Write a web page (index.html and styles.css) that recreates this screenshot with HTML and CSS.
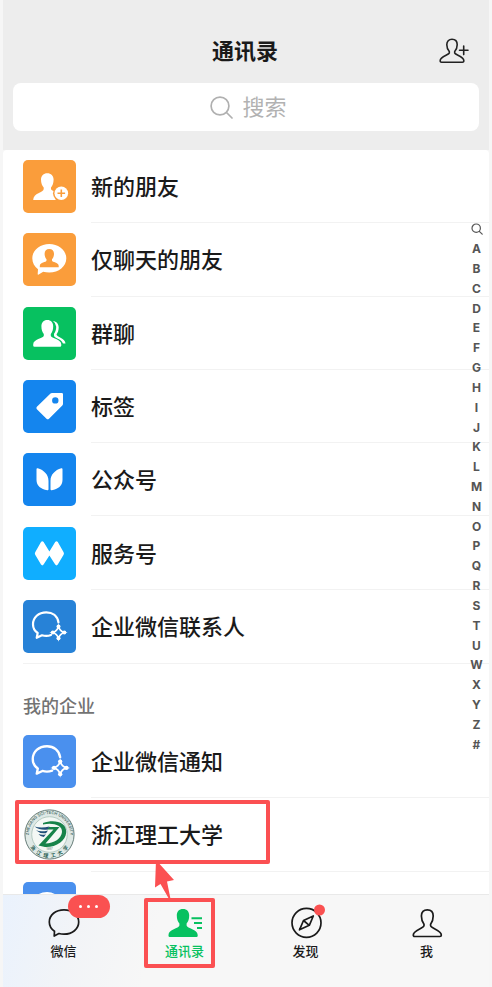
FILE: index.html
```html
<!DOCTYPE html>
<html lang="zh-CN">
<head>
<meta charset="utf-8">
<meta name="viewport" content="width=device-width, initial-scale=1">
<title>通讯录</title>
<link rel="stylesheet" href="styles.css">
</head>
<body>
<svg class="sprite" aria-hidden="true">
  <symbol id="wecom" viewBox="0 0 53 53">
    <path d="M35.500 22.500C34.500 16 29.500 12.300 23.300 12.300C15.500 12.300 10 17.500 10 24.200C10 28 11.700 31 14.700 33L13.700 37.800L19 35.300C22 36.200 25.500 36 28 35" fill="none" stroke="#fff" stroke-width="2.200" stroke-linecap="round" stroke-linejoin="round"/>
    <path d="M35.500 26.500Q36.800 31.200 41.500 32.500Q36.800 33.800 35.500 38.500Q34.200 33.800 29.500 32.500Q34.200 31.200 35.500 26.500Z" fill="none" stroke="#fff" stroke-width="1.700"/>
    <g fill="#fff"><circle cx="35.500" cy="26.600" r="2"/><circle cx="41.300" cy="32.500" r="2"/><circle cx="35.500" cy="38.300" r="2"/><circle cx="29.800" cy="32.500" r="2"/></g>
  </symbol>
</svg>
<div class="app">
  <header class="header">
    <div class="titlebar">
      <h1 class="title">通讯录</h1>
      <button class="add" type="button" aria-label="添加朋友">
        <svg width="30" height="26" viewBox="0 0 30 26" fill="none" stroke="#222" stroke-width="1.600" stroke-linejoin="round" stroke-linecap="round"><path d="M10.300 13.500C8.700 11.700 7.800 9.300 7.800 6.800C7.800 3.400 9.800 1.300 13 1.300S18.200 3.400 18.200 6.800C18.200 9.300 17.300 11.700 15.700 13.500V15C16 16.800 24.800 18.600 24.800 22.500Q25 24.300 23.400 24.300H2.600Q1 24.300 1.200 22.500C1.200 18.600 10 16.800 10.300 15Z"/><path d="M20.500 12.300H29M24.700 8V16.600"/></svg>
      </button>
    </div>
    <label class="search">
      <svg width="23" height="23" viewBox="0 0 23 23" fill="none" stroke="#b0b0b0" stroke-width="1.700" stroke-linecap="round"><circle cx="10" cy="10" r="8.900"/><path d="M16.500 16.500L22 22"/></svg>
      <input type="text" placeholder="搜索" aria-label="搜索">
    </label>
  </header>

  <main class="content">
    <ul class="list list-main">
      <li><a class="row" href="#">
        <svg class="icon orange" viewBox="0 0 53 53"><path fill="#fff" d="M24.300 13.200C28 13.200 30.600 15.800 30.600 19.500C30.600 23 29.500 25.800 28 27.400V29C28 31 36.500 32 38 36V40H10.200C10.200 33 20.700 32.500 20.700 29V27.400C19.100 25.800 18 23 18 19.500C18 15.800 20.600 13.200 24.300 13.200Z"/><circle cx="38.300" cy="33.300" r="8.300" fill="#fa9d3b"/><circle cx="38.300" cy="33.300" r="6.800" fill="#fff"/><path d="M34.500 33.300H42.100M38.300 29.500V37.100" stroke="#fa9d3b" stroke-width="1.600"/></svg>
        <span class="name">新的朋友</span></a></li>
      <li><a class="row" href="#">
        <svg class="icon orange" viewBox="0 0 53 53"><path fill="#fff" d="M26.300 11C35.800 11 43.300 17.200 43.300 25.300S35.800 39.600 26.300 39.600Q23 39.600 20.200 38.800L15.700 41.500Q14.500 42 14.700 40.700L15 36.200C11.500 33.600 9.300 29.800 9.300 25.300C9.300 17.200 16.800 11 26.300 11Z"/><path fill="#fa9d3b" d="M26.300 16C29.200 16 31 18 31 20.700C31 23 30.300 25 29 26.300V27.600C29.300 29.500 35.500 29.500 35.700 32.800V34.300H16.800V32.800C17 29.500 23.200 29.500 23.500 27.600V26.300C22.300 25 21.600 23 21.600 20.700C21.600 18 23.400 16 26.300 16Z"/></svg>
        <span class="name">仅聊天的朋友</span></a></li>
      <li><a class="row" href="#">
        <svg class="icon green" viewBox="0 0 53 53"><path fill="#fff" d="M24.300 13C28 13 30.200 15.700 30.200 19.300C30.200 22.800 29.300 25.300 27.800 27V28.800C28.200 31.500 38.300 32 38.300 37.500V38.500Q38.300 39.700 37 39.700H11.500Q10.200 39.700 10.200 38.500V37.500C10.200 32 20.300 31.500 20.800 28.800V27C19.300 25.300 18.400 22.800 18.400 19.300C18.400 15.700 20.600 13 24.300 13Z"/><path fill="#fff" d="M30 14C33.500 14.500 35.700 16.800 35.700 20.500C35.700 23.500 34.800 25.800 33.500 27.300C33.500 30.200 42.500 31.500 42.500 36.500Q40.500 36.700 39.800 36.300C38.500 31.500 31 31.500 31 28.500V26.800C32.500 24.700 33.200 22.500 33.200 19.800Q33 16 30 14Z"/></svg>
        <span class="name">群聊</span></a></li>
      <li><a class="row" href="#">
        <svg class="icon blue" viewBox="0 0 53 53"><path fill="#fff" fill-rule="evenodd" d="M27.500 13.500Q28 13 29 13H38.800Q40 13 40 14.200V23.800Q40 24.800 39.300 25.500L26 38.700Q24.700 39.900 23.500 38.700L13.900 29.200Q12.700 28 13.900 26.800ZM32.300 17.200A3.200 3.200 0 1 0 32.300 23.600A3.200 3.200 0 1 0 32.300 17.200Z"/></svg>
        <span class="name">标签</span></a></li>
      <li><a class="row" href="#">
        <svg class="icon blue" viewBox="0 0 53 53"><path fill="#fff" d="M13.500 16.200Q13.500 14.900 14.700 15.300C21 17.200 25.500 21.500 25.500 28V36.200Q25.500 37.400 24.300 37.200C18 36.200 13.500 33 13.500 27ZM39.500 16.200Q39.500 14.900 38.300 15.300C32 17.200 27.500 21.500 27.500 28V36.200Q27.500 37.400 28.700 37.200C35 36.200 39.500 33 39.500 27Z"/></svg>
        <span class="name">公众号</span></a></li>
      <li><a class="row" href="#">
        <svg class="icon sky" viewBox="0 0 53 53"><path fill="#fff" d="M18 15.100Q19.300 13.500 20.600 15.100L26.400 24.400L32.200 15.100Q33.500 13.500 34.800 15.100L40.600 25.200Q41.300 26.500 40.600 27.800L34.800 37.600Q33.500 39.200 32.200 37.600L26.400 28.600L20.600 37.600Q19.300 39.200 18 37.600L12.200 27.800Q11.500 26.500 12.200 25.200Z"/></svg>
        <span class="name">服务号</span></a></li>
      <li><a class="row" href="#">
        <svg class="icon wecom" viewBox="0 0 53 53"><use href="#wecom"/></svg>
        <span class="name">企业微信联系人</span></a></li>
    </ul>

    <h2 class="section">我的企业</h2>
    <ul class="list list-corp">
      <li><a class="row" href="#">
        <svg class="icon cornflower" viewBox="0 0 53 53"><use href="#wecom" x="-1" y="-2" width="57" height="57"/></svg>
        <span class="name">企业微信通知</span></a></li>
      <li><a class="row marked" href="#">
        <svg class="icon" viewBox="0 0 53 53">
          <defs><path id="arc-top" d="M6.500 32.500A20.800 20.800 0 1 1 46.500 32.500"/></defs>
          <circle cx="26.500" cy="26.500" r="24.600" fill="#dfe9e6" stroke="#667c78" stroke-width="1"/>
          <circle cx="26.500" cy="26.500" r="17.800" fill="#f4f8f5" stroke="#b5cbc3" stroke-width="1"/>
          <text class="seal-en"><textPath href="#arc-top" startOffset="50%" text-anchor="middle">ZHEJIANG SCI-TECH UNIVERSITY</textPath></text>
          <g class="seal-cn" text-anchor="middle">
            <text transform="rotate(50 26.500 26.500)" x="26.500" y="49.500">浙</text>
            <text transform="rotate(30 26.500 26.500)" x="26.500" y="49.500">江</text>
            <text transform="rotate(10 26.500 26.500)" x="26.500" y="49.500">理</text>
            <text transform="rotate(-10 26.500 26.500)" x="26.500" y="49.500">工</text>
            <text transform="rotate(-30 26.500 26.500)" x="26.500" y="49.500">大</text>
            <text transform="rotate(-50 26.500 26.500)" x="26.500" y="49.500">学</text>
          </g>
          <path fill="#17834a" d="M20 15C32 11 43.500 14.500 43.200 24C43 33 33 39.500 22 39L15.500 37.500L30.500 21.500H24L26 19H36.500L22.500 35.500C31 35.500 38.500 30.500 39 24C39.300 17 30 14.500 20 16.500Z"/>
          <path fill="#204f78" d="M11.500 18.500Q18 20.500 26.500 18.500L24.500 21.500Q17 22.500 11.500 18.500ZM13 22.300Q18 24.300 25 22.500L23 25.200Q17 26 13 22.300ZM15.500 26Q19 27.500 23 26.200L20.800 29Q17.500 29 15.500 26Z"/>
          <text class="seal-year" x="26.500" y="42" text-anchor="middle">1897</text>
        </svg>
        <span class="name">浙江理工大学</span></a></li>
      <li><a class="row" href="#" aria-label="企业微信">
        <svg class="icon cornflower" viewBox="0 0 53 53"><use href="#wecom" x="-1" y="-2" width="57" height="57"/></svg>
        <span class="name"></span></a></li>
    </ul>

    <nav class="index" aria-label="索引">
      <a href="#" aria-label="搜索"><svg width="12" height="12" viewBox="0 0 12 12" fill="none" stroke="#555" stroke-width="1.200" stroke-linecap="round"><circle cx="5.200" cy="5.200" r="4.200"/><path d="M8.300 8.300L11.200 11.200"/></svg></a>
      <a href="#">A</a><a href="#">B</a><a href="#">C</a><a href="#">D</a><a href="#">E</a><a href="#">F</a><a href="#">G</a><a href="#">H</a><a href="#">I</a><a href="#">J</a><a href="#">K</a><a href="#">L</a><a href="#">M</a><a href="#">N</a><a href="#">O</a><a href="#">P</a><a href="#">Q</a><a href="#">R</a><a href="#">S</a><a href="#">T</a><a href="#">U</a><a href="#">W</a><a href="#">X</a><a href="#">Y</a><a href="#">Z</a><a href="#">#</a>
    </nav>
  </main>

  <nav class="tabs">
    <a class="tab" href="#">
      <svg class="tab-icon" viewBox="0 0 32 32" fill="none" stroke="#1a1a1a" stroke-width="1.700" stroke-linejoin="round"><path d="M16 2.800C24.300 2.800 30.700 8 30.700 15S24.300 27.200 16 27.200Q13.200 27.200 10.900 26.500L6.200 29L6.500 24.300C3.200 22 1.300 18.700 1.300 15C1.300 8 7.700 2.800 16 2.800Z"/></svg>
      <span>微信</span>
      <span class="badge"><i></i><i></i><i></i></span>
    </a>
    <a class="tab active" href="#">
      <svg class="tab-icon" viewBox="0 0 32 32"><path fill="#07c160" d="M14 2C18 2 20.200 4.700 20.200 8.500C20.200 12 19.200 14.800 17.600 16.600V18.500C18 21.500 28.700 22 28.700 28V28.700Q28.700 29.900 27.500 29.900H.7Q-.5 29.900 -.5 28.700V28C-.5 22 10 21.500 10.400 18.500V16.600C8.800 14.800 7.800 12 7.800 8.500C7.800 4.700 10 2 14 2Z"/><path d="M22.500 11.300H33M25 16H33M28 21H33" stroke="#07c160" stroke-width="1.900"/></svg>
      <span>通讯录</span>
      <svg class="pointer" width="20" height="40" viewBox="0 0 20 40"><path fill="#fb5052" d="M2 0L20 20L13 21.500L16.500 39H15L6.500 24L1 27.500Z"/></svg>
    </a>
    <a class="tab" href="#">
      <svg class="tab-icon" viewBox="0 0 32 32" fill="none" stroke="#1a1a1a" stroke-width="1.700" stroke-linejoin="round"><circle cx="16.500" cy="15.800" r="14.500"/><path d="M23.300 9L19.300 18.300L9.500 22.800L13.500 13.500ZM13.500 13.500L19.300 18.300"/><circle cx="29.500" cy="3" r="5.500" fill="#fa5151" stroke="none"/></svg>
      <span>发现</span>
    </a>
    <a class="tab" href="#">
      <svg class="tab-icon" viewBox="0 0 32 32" fill="none" stroke="#1a1a1a" stroke-width="1.700" stroke-linejoin="round"><path d="M13 17.200C11.300 15 10.400 12 10.400 9C10.400 5 12.600 2.800 16.300 2.800S22.200 5 22.200 9C22.200 12 21.300 15 19.600 17.200V18.500C19.600 21.500 30.300 23 30.300 28V28.300Q30.300 29.500 29 29.500H3.600Q2.300 29.500 2.300 28.300V28C2.300 23 13 21.500 13 18.500Z"/></svg>
      <span>我</span>
    </a>
  </nav>
</div>
</body>
</html>
```

FILE: styles.css
```css
*,
*::before,
*::after {
  box-sizing: border-box;
}

body {
  margin: 0;
  background: #f6f6f6;
  color: #1a1a1a;
  font-family: Inter, "Noto Sans CJK SC", sans-serif;
}

a {
  color: inherit;
  text-decoration: none;
}

ul {
  margin: 0;
  padding: 0;
  list-style: none;
}

.sprite {
  display: none;
}

.app {
  display: flex;
  flex-direction: column;
  height: 100vh;
  margin: 0 3px;
}

/* Header */
.header {
  flex: none;
  padding: 18px 10px 19px;
  background: #ededed;
}

.titlebar {
  display: grid;
  grid-template-columns: 1fr auto 1fr;
  align-items: center;
  height: 65px;
  padding-right: 10px;
  padding-left: 8px;
}

.title {
  grid-column: 2;
  margin: 0;
  font-size: 22px;
  line-height: 32px;
  font-weight: 700;
}

.add {
  display: flex;
  justify-self: end;
  padding: 0;
  border: 0;
  background: none;
}

.search {
  display: flex;
  align-items: center;
  justify-content: center;
  gap: 10px;
  height: 48px;
  padding-left: 6px;
  border-radius: 8px;
  background: #fff;
}

.search input {
  width: 46px;
  padding: 0;
  border: 0;
  outline: 0;
  background: none;
  font: inherit;
  font-size: 22px;
  line-height: 32px;
}

.search input::placeholder {
  color: #b2b2b2;
  opacity: 1;
}

/* Contact list */
.content {
  position: relative;
  flex: 1;
  min-height: 0;
  overflow: hidden;
  border-radius: 4px 4px 0 0;
  background: #fff;
}

.list {
  display: grid;
  grid-auto-rows: 1fr;
}

.list-main {
  min-height: 513px;
}

.list-corp {
  min-height: 220px;
}

.row {
  position: relative;
  display: flex;
  align-items: center;
  gap: 15px;
  height: 100%;
  padding-left: 20px;
}

.icon {
  flex: none;
  width: 53px;
  height: 53px;
  border-radius: 5px;
}

.orange { background: #fa9d3b; }
.green { background: #07c160; }
.blue { background: #1485ee; }
.sky { background: #10aeff; }
.wecom { background: #2782d7; }
.cornflower { background: #4a90ee; }

.name {
  display: flex;
  flex: 1;
  align-items: center;
  align-self: stretch;
  padding-bottom: 2px;
  border-bottom: 1px solid #f2f2f2;
  font-size: 22px;
  font-weight: 500;
}

.list-main li:last-child .name {
  border-bottom: 0;
}

.section {
  display: flex;
  align-items: flex-end;
  height: 62px;
  margin: 0 0 0 20px;
  padding-bottom: 5px;
  border-top: 1px solid #f2f2f2;
  color: #737373;
  font-size: 18px;
  line-height: 26px;
  font-weight: 500;
}

.marked::after {
  content: "";
  position: absolute;
  top: 2px;
  left: 12px;
  width: 255px;
  height: 64px;
  border: 4px solid #fb5052;
  border-radius: 2px;
}

.seal-en {
  fill: #4d706c;
  font-size: 4px;
  font-weight: 600;
}

.seal-cn {
  fill: #245c50;
  font-size: 5px;
  font-weight: 700;
}

.seal-year {
  fill: #6a8a84;
  font-size: 3px;
}

/* Alphabet index */
.index {
  position: absolute;
  top: 69px;
  right: 0;
  display: grid;
  grid-auto-rows: 1fr;
  width: 25px;
  height: 535px;
  color: #555;
  font-size: 12px;
  font-weight: 700;
}

.index a {
  display: flex;
  align-items: center;
  justify-content: center;
}

/* Bottom tabs */
.tabs {
  display: grid;
  flex: none;
  grid-template-columns: repeat(4, 1fr);
  height: 93px;
  padding-right: 2px;
  border-top: 1px solid #e9e9e9;
  background: linear-gradient(105deg, #eaf2fd 0, #f2f4f7 16%, #f7f7f7 32%);
}

.tab {
  position: relative;
  display: flex;
  flex-direction: column;
  align-items: center;
  gap: 3px;
  padding-top: 12px;
  font-size: 13px;
  line-height: 18px;
  font-weight: 500;
}

.tab-icon {
  width: 32px;
  height: 32px;
  overflow: visible;
}

.active {
  color: #07c160;
}

.active::after {
  content: "";
  position: absolute;
  top: 3px;
  left: 50%;
  width: 71px;
  height: 70px;
  margin-left: -41px;
  border: 4px solid #fb5052;
  border-radius: 2px;
}

.pointer {
  position: absolute;
  top: -35px;
  left: 50%;
  margin-left: -31px;
}

.badge {
  position: absolute;
  top: 0;
  left: 50%;
  display: flex;
  align-items: center;
  justify-content: center;
  gap: 5px;
  width: 42px;
  height: 23px;
  margin-left: 4px;
  border-radius: 12px;
  background: #fa5151;
}

.badge i {
  width: 3px;
  height: 3px;
  border-radius: 50%;
  background: #fff;
}
```
